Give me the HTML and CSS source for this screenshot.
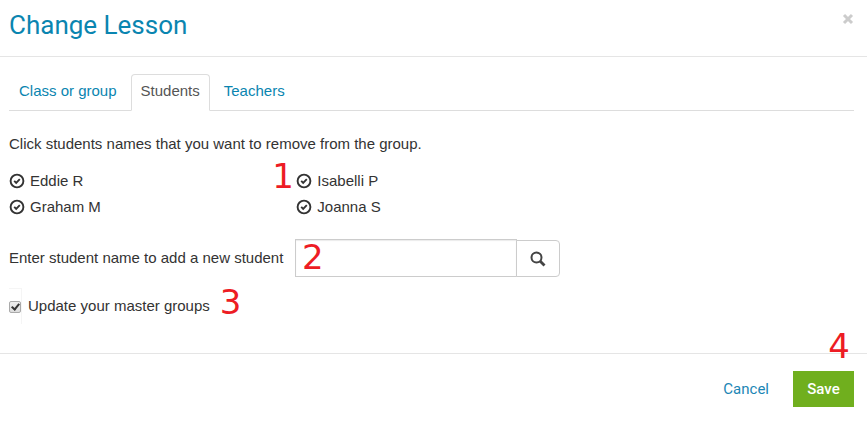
FILE: index.html
```
<!DOCTYPE html>
<html lang="en">
<head>
    <meta charset="UTF-8">
    <meta name="viewport" content="width=device-width, initial-scale=1.0">
    <title>Change Lesson</title>
    <link rel="stylesheet" href="styles.css">
</head>
<body>
    <svg class="sprite" aria-hidden="true">
        <symbol id="ok-circle" viewBox="0 0 16 16">
            <circle cx="8" cy="8" r="6.4" fill="none" stroke="currentColor" stroke-width="1.9"/>
            <path d="M5.2 7.8l2 2L10.8 6.2" fill="none" stroke="currentColor" stroke-width="1.9"/>
        </symbol>
    </svg>

    <header class="modal-header">
        <h1>Change Lesson</h1>
        <button type="button" class="close" aria-label="Close">
            <svg width="12" height="12" viewBox="0 0 12 12"><path d="M2 2l8 8M10 2l-8 8" stroke="currentColor" stroke-width="3"/></svg>
        </button>
    </header>

    <form>
        <main class="modal-body">
            <nav class="tabs">
                <a href="#class">Class or group</a>
                <a href="#students" class="active">Students</a>
                <a href="#teachers">Teachers</a>
            </nav>

            <p>Click students names that you want to remove from the group.</p>
            <ul class="students">
                <li><svg class="ok"><use href="#ok-circle"/></svg>Eddie R</li>
                <li class="marked"><span class="step step-one">1</span><svg class="ok"><use href="#ok-circle"/></svg>Isabelli P</li>
                <li><svg class="ok"><use href="#ok-circle"/></svg>Graham M</li>
                <li><svg class="ok"><use href="#ok-circle"/></svg>Joanna S</li>
            </ul>

            <div class="add-student">
                <label for="student">Enter student name to add a new student</label>
                <div class="search">
                    <input type="text" id="student">
                    <button type="button" aria-label="Search">
                        <svg width="16" height="16" viewBox="0 0 16 16"><circle cx="6.5" cy="6.5" r="5" fill="none" stroke="currentColor" stroke-width="2"/><path d="M10 10l4.5 4.5" stroke="currentColor" stroke-width="2.8"/></svg>
                    </button>
                    <span class="step step-two">2</span>
                </div>
            </div>

            <div class="update">
                <span class="check-box"><input type="checkbox" id="master" checked></span>
                <label for="master">Update your master groups</label>
                <span class="step step-three">3</span>
            </div>
        </main>

        <footer class="modal-footer">
            <button type="button" class="cancel">Cancel</button>
            <button type="submit" class="save">Save</button>
            <span class="step step-four">4</span>
        </footer>
    </form>
</body>
</html>
```
FILE: styles.css
```
* {
    box-sizing: border-box;
}

body {
    margin: 0;
    background-color: #fff;
    color: #333;
    font-family: "Liberation Sans", Arial, sans-serif;
    font-size: 15px;
    line-height: 20px;
}

button {
    font-family: Roboto, sans-serif;
    cursor: pointer;
}

.sprite {
    display: none;
}

.modal-header {
    display: flex;
    justify-content: space-between;
    align-items: flex-start;
    height: 57px;
    padding: 9px 13px 0 9px;
    border-bottom: 1px solid #e5e5e5;
}

h1 {
    margin: 0;
    color: #0a85b0;
    font-family: Roboto, sans-serif;
    font-size: 26px;
    font-weight: 400;
    line-height: 32px;
}

.close {
    display: flex;
    margin-top: 4px;
    padding: 0;
    border: none;
    background: none;
    color: #ccc;
}

.modal-body {
    padding: 17px 13px 0 9px;
}

.tabs {
    display: flex;
    gap: 4px;
    border-bottom: 1px solid #ddd;
}

.tabs a {
    margin-bottom: -1px;
    padding: 6px 9px 9px;
    border: 1px solid transparent;
    border-radius: 4px 4px 0 0;
    color: #0a85b0;
    text-decoration: none;
}

.tabs .active {
    border-color: #ddd #ddd #fff;
    color: #555;
}

p {
    margin: 23px 0 17px;
}

.students {
    display: grid;
    grid-template-columns: 34% 1fr;
    row-gap: 6px;
    margin: 0;
    padding: 0;
    list-style: none;
}

.students li {
    display: flex;
    align-items: center;
    gap: 5px;
}

.ok {
    width: 16px;
    height: 16px;
}

.add-student {
    display: flex;
    align-items: center;
    gap: 4px;
    margin-top: 22px;
}

.add-student label {
    min-width: 282px;
}

.search {
    position: relative;
    display: flex;
    align-items: flex-end;
}

.search input {
    width: 222px;
    height: 38px;
    padding: 6px 12px;
    border: 1px solid #ccc;
    box-shadow: inset 0 1px 1px rgba(0, 0, 0, 0.08);
    font: inherit;
}

.search button {
    display: flex;
    justify-content: center;
    align-items: center;
    width: 44px;
    height: 37px;
    margin-left: -1px;
    padding: 0;
    border: 1px solid #ccc;
    border-radius: 0 4px 4px 0;
    background-color: #fff;
    color: #444;
}

.update {
    position: relative;
    display: flex;
    align-items: center;
    gap: 6px;
    width: max-content;
    margin-top: 11px;
}

.check-box {
    display: flex;
    align-items: center;
    width: 13px;
    height: 36px;
    border: 1px solid #f5f5f5;
    border-width: 1px 1px 0 0;
}

.check-box input {
    position: relative;
    flex: none;
    appearance: none;
    width: 12px;
    height: 12px;
    margin: 0;
    border: 1px solid #aaa;
    border-radius: 2px;
    background: linear-gradient(#eee, #ddd);
}

.check-box input:checked::after {
    content: "";
    position: absolute;
    top: 0;
    left: 3px;
    box-sizing: border-box;
    width: 5px;
    height: 8px;
    border: solid #333;
    border-width: 0 2px 2px 0;
    transform: rotate(40deg);
}

.modal-footer {
    position: relative;
    display: flex;
    justify-content: flex-end;
    gap: 10px;
    margin-top: 29px;
    padding: 17px 13px 15px;
    border-top: 1px solid #e5e5e5;
}

.modal-footer button {
    height: 36px;
    padding: 0 14px;
    border: none;
    font-size: 15px;
}

.cancel {
    background: none;
    color: #1b86b5;
}

.modal-footer .save {
    min-width: 61px;
    background-color: #70af1e;
    color: #fff;
    font-weight: 500;
}

/* red numbers for the steps */
.marked {
    position: relative;
}

.step {
    position: absolute;
    color: #ed1c24;
    font-family: "DejaVu Sans", sans-serif;
    font-size: 34px;
    line-height: 34px;
}

.step-one {
    top: -12px;
    left: -24px;
}

.step-two {
    top: 1px;
    left: 7px;
}

.step-three {
    top: -3px;
    left: 100%;
    margin-left: 10px;
}

.step-four {
    top: -25px;
    right: 17px;
}
```
